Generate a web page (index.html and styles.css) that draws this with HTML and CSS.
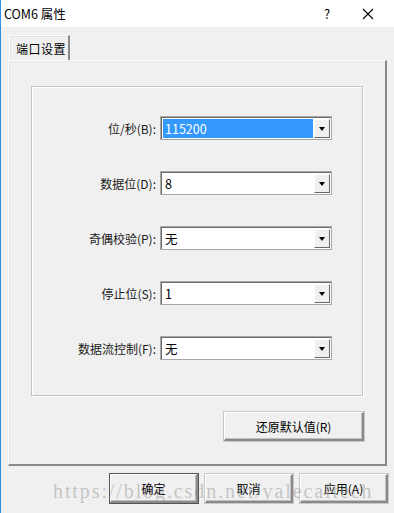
FILE: index.html
```html
<!DOCTYPE html>
<html lang="zh-CN">
<head>
<meta charset="UTF-8">
<title>COM6 属性</title>
<link rel="stylesheet" href="styles.css">
</head>
<body>
<div class="window">
  <div class="titlebar">
    <span class="title">COM6 属性</span>
    <span class="help">?</span>
    <svg class="close" width="12" height="12" viewBox="0 0 12 12">
      <path d="M1 1L11 11M11 1L1 11" stroke="#000" stroke-width="1.1" fill="none"/>
    </svg>
  </div>

  <div class="body">
    <div class="tabs">
      <div class="tab">端口设置</div>
    </div>
    <div class="panel">
      <div class="group">
        <label class="lbl">位/秒(B):</label>
        <div class="combo"><span class="value selected">115200</span><span class="arrow"></span></div>

        <label class="lbl">数据位(D):</label>
        <div class="combo"><span class="value">8</span><span class="arrow"></span></div>

        <label class="lbl">奇偶校验(P):</label>
        <div class="combo"><span class="value">无</span><span class="arrow"></span></div>

        <label class="lbl">停止位(S):</label>
        <div class="combo"><span class="value">1</span><span class="arrow"></span></div>

        <label class="lbl">数据流控制(F):</label>
        <div class="combo"><span class="value">无</span><span class="arrow"></span></div>
      </div>
      <div class="restore-row">
        <button class="btn restore">还原默认值(R)</button>
      </div>
    </div>

    <div class="footer">
      <button class="btn default">确定</button>
      <button class="btn">取消</button>
      <button class="btn">应用(A)</button>
    </div>
  </div>

  <div class="watermark">https://blog.csdn.net/yalecaltech</div>
</div>
</body>
</html>
```

FILE: styles.css
```css
html, body {
  margin: 0;
  padding: 0;
  background: #f0f0f0;
}
.window {
  position: relative;
  width: 394px;
  height: 513px;
  box-sizing: border-box;
  border-left: 1px solid #2b8fe6;
  background: #f0f0f0;
  font-family: "Noto Sans CJK SC", "Noto Sans", sans-serif;
  font-size: 12px;
  color: #000;
  overflow: hidden;
}
.titlebar {
  height: 27px;
  background: #fff;
  display: flex;
  align-items: center;
  margin-left: -1px;
}
.title {
  padding-left: 4px;
  font-size: 12.5px;
  flex: 1;
}
.help {
  font-size: 13px;
  width: 12px;
  margin-right: 26px;
}
.close {
  margin-right: 20px;
}

.body {
  padding: 8px 0 0 7px;
}
.tabs {
  display: flex;
  height: 25px;
}
.tab {
  width: 61px;
  height: 25px;
  box-sizing: border-box;
  margin-left: 1px;
  border-top: 1px solid #fff;
  border-left: 1px solid #fff;
  border-right: 2px solid #8a8a8a;
  box-shadow: inset 1px 1px 0 #e3e3e3;
  padding: 4px 0 0 6px;
  font-size: 12px;
  letter-spacing: 0.5px;
}
.panel {
  width: 379px;
  height: 406px;
  box-sizing: border-box;
  border-top: 1px solid #fff;
  border-left: 1px solid #fff;
  border-right: 2px solid #8a8a8a;
  border-bottom: 2px solid #8a8a8a;
  box-shadow: inset 1px 1px 0 #e3e3e3;
  padding: 25px 22px 0 22px;
}
.group {
  height: 310px;
  box-sizing: border-box;
  border: 1px solid #c4c4c4;
  box-shadow: inset 1px 1px 0 #fff, 1px 1px 0 #fff;
  display: grid;
  grid-template-columns: 1fr 172px;
  grid-auto-rows: 24px;
  row-gap: 31px;
  column-gap: 4px;
  align-items: center;
  padding: 29px 30px 0 0;
}
.lbl {
  text-align: right;
  color: #1a1a1a;
}
.combo {
  height: 24px;
  box-sizing: border-box;
  border: 1px solid #a8a8a8;
  box-shadow: inset 1px 1px 0 #6b6b6b;
  background: #fff;
  display: flex;
  align-items: stretch;
  padding: 2px 1px 1px 2px;
  font-size: 12.5px;
}
.value {
  flex: 1;
  display: flex;
  align-items: center;
  padding-left: 2px;
  margin-right: 1px;
}
.value.selected {
  background: #3399ff;
  color: #fff;
}
.arrow {
  width: 16px;
  box-sizing: border-box;
  background: #f0f0f0;
  border-top: 1px solid #fff;
  border-left: 1px solid #fff;
  border-right: 1px solid #696969;
  border-bottom: 1px solid #696969;
  display: flex;
  align-items: center;
  justify-content: center;
}
.arrow::after {
  content: "";
  border-left: 3.5px solid transparent;
  border-right: 3.5px solid transparent;
  border-top: 4px solid #000;
  margin-top: 1px;
}

.restore-row {
  display: flex;
  justify-content: flex-end;
  padding-top: 16px;
}
.btn {
  font-family: "Noto Sans CJK SC", "Noto Sans", sans-serif;
  font-size: 12px;
  color: #000;
  background: #f0f0f0;
  height: 29px;
  box-sizing: border-box;
  border-top: 1px solid #fff;
  border-left: 1px solid #fff;
  border-right: 2px solid #8a8a8a;
  border-bottom: 2px solid #8a8a8a;
  box-shadow: inset -1px -1px 0 #c0c0c0;
  outline: 1px solid #c8c8c8;
  padding: 0;
}
.restore {
  width: 140px;
  margin-right: -1px;
}
.footer {
  display: flex;
  justify-content: flex-end;
  gap: 7px;
  padding: 8px 6px 0 0;
}
.footer .btn {
  width: 88px;
}
.btn.default {
  outline: 1px solid #555;
}
.watermark {
  position: absolute;
  left: 52px;
  top: 480px;
  font-family: "Liberation Serif", serif;
  font-size: 20px;
  letter-spacing: 1.9px;
  color: rgba(140, 140, 140, 0.45);
  pointer-events: none;
  white-space: nowrap;
}
```
